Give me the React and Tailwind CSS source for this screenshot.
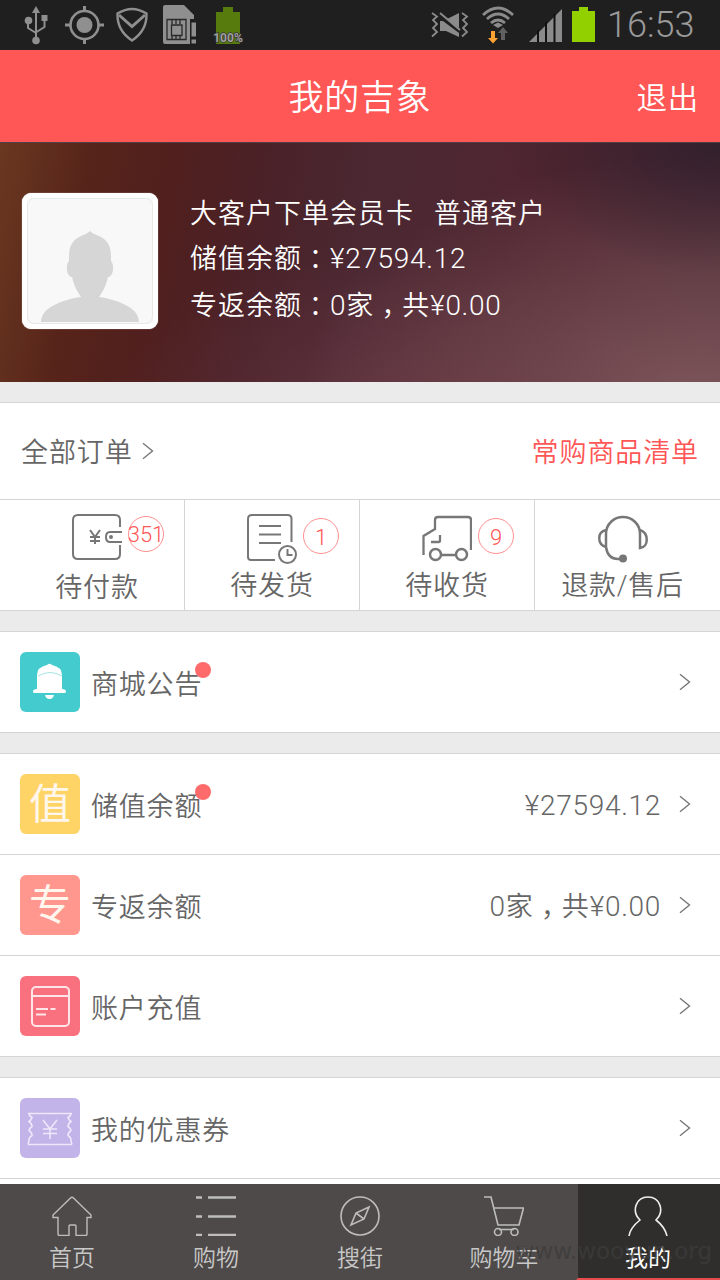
const chevron = (
  <svg width="12" height="18" viewBox="0 0 12 18" fill="none" stroke="#777" strokeWidth="1.4">
    <path d="M1 1.2 10.500 9 1 16.8" />
  </svg>
);

// Centred full-width punctuation, dropped towards the baseline
const Colon = () => (
  <span className="inline-block translate-y-[1px] font-['Noto_Sans_CJK_TC',sans-serif] leading-none">：</span>
);

const Comma = () => (
  <span className="inline-block translate-y-[9px] font-['Noto_Sans_CJK_TC',sans-serif] leading-none">，</span>
);

const Num = ({ children }) => <span className="text-[28px] leading-none tracking-[0.7px]">{children}</span>;

const StatusBar = () => (
  <div className="flex h-[50px] items-start justify-between bg-[#1f1f1f] text-[#8f8f8f]">
    <svg width="250" height="50" viewBox="0 0 250 50" fill="none" stroke="#8f8f8f" strokeWidth="2">
      <path d="M36 10v30M28 21v7l8 5M44.500 19v8l-8 5" />
      <path d="m36 6 4 7h-8z" fill="#8f8f8f" stroke="none" />
      <circle cx="28.500" cy="20.500" r="3.800" fill="#8f8f8f" stroke="none" />
      <circle cx="36" cy="40.500" r="3.800" fill="#8f8f8f" stroke="none" />
      <path d="M41.500 15h6v6h-6z" fill="#8f8f8f" stroke="none" />
      <circle cx="84.500" cy="25" r="14" strokeWidth="2.600" />
      <circle cx="84.500" cy="25" r="8" fill="#8f8f8f" stroke="none" />
      <path d="M84.500 6v6M84.500 38v6M65 25h6M98 25h6" strokeWidth="3" />
      <path d="M132 9q-7 0-14.500 4.500c-.5 12 4 20 14.500 27 10.500-7 15-15 14.500-27Q139 9 132 9z" strokeWidth="2.400" />
      <path d="m119 15 13 11.500L145 15" strokeWidth="3" />
      <path d="M165 5h19l10 10v4h-4v25h-25q-2 0-2-2V7q0-2 2-2z" fill="#8f8f8f" stroke="none" />
      <path d="M167 19.500h19v20h-19zM171.500 25h10.500v10.500h-10.500zM172 20v4M176 20v4M180 20v4M172 36v4M176 36v4M180 36v4" stroke="#292929" strokeWidth="1.300" />
      <path d="M191 22h5.500v15H191zM191 39h5.500v5H191z" fill="#8f8f8f" stroke="#1f1f1f" strokeWidth="1" />
      <path d="M216 12h7V7h10v5h7v32h-24z" fill="#587b0e" stroke="none" />
      <text x="228" y="42" textAnchor="middle" fontFamily="Roboto" fontWeight="700" fontSize="12" fill="#a0a0a0" stroke="#333" strokeWidth="1.500" paintOrder="stroke">100%</text>
    </svg>
    <div className="flex">
      <svg width="180" height="50" viewBox="425 0 180 50" fill="none" stroke="#8b8b8b" strokeWidth="1.800">
        <path d="m432 13 5 3.500-4 3.500 4 4-4 4 4 4-5 4.500M462 13l5 3.500-4 3.500 4 4-4 4 4 4-5 4.500" />
        <path d="M440 21v10h6l13 6v-4l-16-12zM447 19l12-6v15z" fill="#8b8b8b" stroke="none" />
        <path d="m440 13 20 17" strokeWidth="2" />
        <path d="M483 15q15-14 30 0M487 19q11-10 22 0M491 23q7-6 14 0" strokeWidth="2.800" />
        <path d="m493 25 5 3 5-3-5-2.500z" fill="#8b8b8b" stroke="none" />
        <path d="m503 27 5 6h-3v7h-4v-7h-3z" fill="#606060" stroke="none" />
        <path d="M491 31h4v7h3l-5 5.500-5-5.500h3z" fill="#ffa233" stroke="none" />
        <path d="m529 42 33-33v33z" fill="#8b8b8b" stroke="none" />
        <path d="M538 30v12M546 22v20M554.500 14v28" stroke="#111" strokeWidth="2" />
        <path d="M572 11h7V7h9v4h7v31h-23z" fill="#92d000" stroke="none" />
      </svg>
      <span className="w-[115px] pl-[2px] pt-[3px] font-[Roboto] text-[36px] font-[350] leading-[44px] text-[#9a9a9a]">16:53</span>
    </div>
  </div>
);

const Profile = () => (
  <div className="flex h-[240px] items-start border-t border-[#4f4047] bg-[radial-gradient(ellipse_30%_55%_at_100%_0%,#2e1e2cd9,#2e1e2c00),radial-gradient(ellipse_55%_100%_at_97%_105%,#80585dee,#80585d00),radial-gradient(ellipse_40%_65%_at_55%_110%,#6b384499,#6b384400),linear-gradient(100deg,#6a3820_0%,#57241a_12%,#501f1e_24%,#4a2229_37%,#4b2832_50%,#502530_75%,#4c2b34_100%)] pl-[22px] pt-[50px]">
    <div className="h-[136px] w-[136px] rounded-[9px] border-[5px] border-white bg-[#f8f8f8] shadow-[0_0_1px_#fff]">
      <svg width="126" height="126" viewBox="0 0 126 126">
        <rect x=".5" y=".5" width="125" height="125" rx="7" fill="none" stroke="#e7e7e7" />
        <path d="M63 33c-4 4-9 4-14 8-7 6-7 12-7 22-4 4-2 16 3 16 2 9 5 14 9 20-20 3-40 11-40 25h98c0-14-20-22-40-25 4-6 7-11 9-20 5 0 7-12 3-16 0-10 0-16-7-22-5-4-10-4-14-8z" fill="#d6d6d6" />
      </svg>
    </div>
    <div className="ml-8 text-[27px] leading-[46px] tracking-[1px] text-white">
      <p className="-mt-[2px] h-[45px] whitespace-pre">大客户下单会员卡<span className="ml-[20px]">普通客户</span></p>
      <p className="h-[47px]">储值余额<Colon /><Num>¥27594.12</Num></p>
      <p>专返余额<Colon /><Num>0</Num>家<Comma />共<Num>¥0.00</Num></p>
    </div>
  </div>
);

const orders = [
  {
    label: '待付款',
    count: 351,
    icon: (
      <>
        <path d="M48 14V7q0-5-5-5H6Q1 2 1 7v34q0 5 5 5h37q5 0 5-5v-9" />
        <path d="M50 19H38q-4 0-4 5t4 5h12M18 17l5 7 5-7M23 24v7M18 24h10M18 28h10" />
        <circle cx="39" cy="24" r="1" />
      </>
    ),
  },
  {
    label: '待发货',
    count: 1,
    icon: (
      <>
        <path d="M44.500 29V6q0-4-4-4H5Q1 2 1 6v38q0 3 3 3h24M12 13h22M12 21.500h22M12 30h22" />
        <circle cx="40.500" cy="41.500" r="8.500" />
        <path d="M40.500 36v6h5" />
      </>
    ),
  },
  {
    label: '待收货',
    count: 9,
    icon: (
      <>
        <path d="M1.500 42V23L13 16V7q0-3 3-3h30q3 0 3 3v30M18 22v6q0 1-1 1H9M20 42h13" strokeWidth="2.300" />
        <circle cx="13.500" cy="41.500" r="5.500" strokeWidth="2.500" />
        <circle cx="39.500" cy="41.500" r="5.500" strokeWidth="2.500" />
      </>
    ),
  },
  {
    label: '退款/售后',
    icon: (
      <>
        <path d="M8 34V21C8 11 16 4 25 4s17 7 17 17v14c9-1 9-15 0-18M8 17c-9 2-9 14 0 17 1 7 5 12 12 12h5" strokeWidth="2.500" />
        <circle cx="25" cy="45.500" r="3" fill="#777" />
      </>
    ),
  },
];

const Orders = () => (
  <div className="border-y border-[#d5d5d5] bg-white">
    <div className="flex h-[96px] items-center justify-between px-[21px] text-[27px] tracking-[0.9px]">
      <span className="flex items-center gap-[9px]"><span className="pt-[5px]">全部订单</span> {chevron}</span>
      <span className="pt-[5px] text-[#ff5656]">常购商品清单</span>
    </div>
    <div className="flex h-[111px] border-t border-[#d5d5d5] pl-[10px]">
      {orders.map((order, i) => (
        <div key={order.label} className={`flex w-[175px] flex-col items-center ${i < 3 ? 'border-r border-[#d5d5d5]' : ''}`}>
          <div className={`relative ${i === 0 ? 'mt-[13px] mb-[4px]' : 'mt-[13px] mb-[2px]'}`}>
            <svg width="50" height="51" viewBox="0 0 50 51" fill="none" stroke="#777" strokeWidth="2">
              {order.icon}
            </svg>
            {order.count && (
              <span className={`absolute left-[56px] flex h-[36px] w-[36px] items-center justify-center rounded-full border-[1.5px] border-[#ff8f8f] text-[22px] text-[#ff5656] ${i === 0 ? 'top-[3px]' : 'top-[5px] pt-[2px]'}`}>
                {order.count}
              </span>
            )}
          </div>
          <span className="text-[27px] leading-[40px] tracking-[0.8px] whitespace-nowrap">{order.label}</span>
        </div>
      ))}
    </div>
  </div>
);

const BellIcon = () => (
  <svg width="60" height="60" viewBox="0 0 60 60" fill="#fff">
    <path d="M27 13q2.500-2.500 5 0 10 2 10 10v14q4 0 4 2.500 0 1.500-1.500 1.500h-30q-1.500 0-1.500-1.500 0-2.500 4-2.500V23q0-8 10-10zM25 43h9q-1 4-4.500 4T25 43z" />
    <path d="M18 24q12-7 24 0" fill="none" stroke="#a5e4e5" />
  </svg>
);

const CardIcon = () => (
  <svg width="60" height="60" viewBox="0 0 60 60" fill="none" stroke="#ffe5e8" strokeWidth="2">
    <rect x="12" y="11" width="37" height="39" rx="4" />
    <path d="M12 20h37M16 33h12M30.500 33h5M16 38.500h10" />
  </svg>
);

const CouponIcon = () => (
  <svg width="60" height="60" viewBox="0 0 60 60" fill="none" stroke="#eee8fa" strokeWidth="1.600">
    <path d="M8 15.500h44M8 46.500h44" />
    <path d="M9 15q0 3 3 4.500-1 3-3 4 3 2 3 5-3 2-3 4 3 2 3 5-3 2-3 4 0 2-1 5M51 15q0 3-3 4.500 1 3 3 4-3 2-3 5 3 2 3 4-3 2-3 5 3 2 3 4 0 2 1 5M23 22l7 9 7-9M30 31v10M23 31h14M23 35.500h14" />
  </svg>
);

const Row = ({ color, icon, label, value, dot }) => (
  <div className="flex h-[101px] items-center border-b border-[#d5d5d5] bg-white px-5">
    <div className={`flex h-[60px] w-[60px] items-center justify-center rounded-[6px] text-[42px] font-normal text-[#fff7ee] ${color}`}>{icon}</div>
    <span className="relative ml-[11px] pt-[6px] text-[27px] tracking-[0.8px]">
      {label}
      {dot && <i className="absolute -right-[9px] top-[3px] h-4 w-4 rounded-full bg-[#ff6b6b]" />}
    </span>
    <span className="ml-auto mr-[18px] pt-[5px] text-[27px] tracking-[1px]">{value}</span>
    <span className="mr-[9px]">{chevron}</span>
  </div>
);

const tabs = [
  { label: '首页', icon: <path d="M6 21.500H1V19L18.500 2q1.500-1.500 3 0L39 19v2.500h-4V38q0 1.500-1.500 1.500H24V30q0-1-1-1h-5q-1 0-1 1v9.500H7.500Q6 39.500 6 38z" strokeWidth="1.400" /> },
  { label: '购物', icon: <path d="M0 1.500h6M12 1.500h28M0 20.500h6M12 20.500h28M0 39h6M12 39h28" strokeWidth="2.400" /> },
  {
    label: '搜街',
    icon: (
      <>
        <circle cx="20" cy="20" r="19" />
        <path d="m29 11-13 6-5 12 13-6zM16 17l8 6" />
      </>
    ),
  },
  {
    label: '购物车',
    icon: (
      <>
        <path d="M0 1h7l7 28h21l4.500-17H10" />
        <path d="M15 33.500h15" />
        <circle cx="14" cy="36" r="3.500" />
        <circle cx="30.500" cy="36" r="3.500" />
      </>
    ),
  },
  { label: '我的', icon: <path d="M1 40q1-8 11-16C3 15 8 1 20 1s17 14 8 23q9 7 11 16" /> },
];

const TabBar = () => (
  <div className="relative flex h-[96px] bg-[#4e4a49]">
    {tabs.map((tab, i) => (
      <div
        key={tab.label}
        className={`flex w-[144px] flex-col items-center pt-3 ${
          i === 4 ? 'border-b-2 border-l-2 border-b-[#e84c4c] border-l-[#4e4a49] bg-[#2f2e2c] pr-[2px] text-white' : 'text-[#c8c8c8]'
        }`}
      >
        <svg width="40" height="40" viewBox="0 0 40 40" fill="none" stroke={i === 4 ? '#ededed' : '#bdbdbd'} strokeWidth="1.600">
          {tab.icon}
        </svg>
        <span className={`mt-[6px] text-[23px] leading-[34px] ${i === 4 ? 'font-normal' : ''}`}>{tab.label}</span>
      </div>
    ))}
    <span className="absolute right-[8px] top-[50px] font-['DejaVu_Sans',sans-serif] text-[23px] leading-[34px] font-normal text-[#3d3c3b]/80">www.wooyun.org</span>
  </div>
);

export default function App() {
  return (
    <div className="flex h-[1280px] w-[720px] flex-col overflow-hidden bg-[#ebebeb] font-[Roboto,'Noto_Sans_CJK_SC',sans-serif] font-[350] text-[#666]">
      <StatusBar />
      <header className="grid h-[92px] grid-cols-3 items-center bg-[#ff5656] px-[21px] text-white">
        <span />
        <h1 className="pt-[6px] text-center text-[35px] tracking-[0.8px]">我的吉象</h1>
        <span className="pt-[5px] text-right text-[30.5px] tracking-[0.8px]">退出</span>
      </header>
      <Profile />
      <div className="mt-5">
        <Orders />
      </div>
      <div className="mt-5 border-t border-[#d5d5d5]">
        <Row color="bg-[#44cbcd]" icon={<BellIcon />} label="商城公告" dot />
      </div>
      <div className="mt-5 border-t border-[#d5d5d5]">
        <Row color="bg-[#ffd466]" icon="值" label="储值余额" value={<Num>¥27594.12</Num>} dot />
        <Row color="bg-[#ff978e]" icon="专" label="专返余额" value={<><Num>0</Num>家<Comma />共<Num>¥0.00</Num></>} />
        <Row color="bg-[#f9717f]" icon={<CardIcon />} label="账户充值" />
      </div>
      <div className="mt-5 border-t border-[#d5d5d5] bg-white pb-[5px]">
        <Row color="bg-[#c2b3e8]" icon={<CouponIcon />} label="我的优惠券" />
      </div>
      <TabBar />
    </div>
  );
}
